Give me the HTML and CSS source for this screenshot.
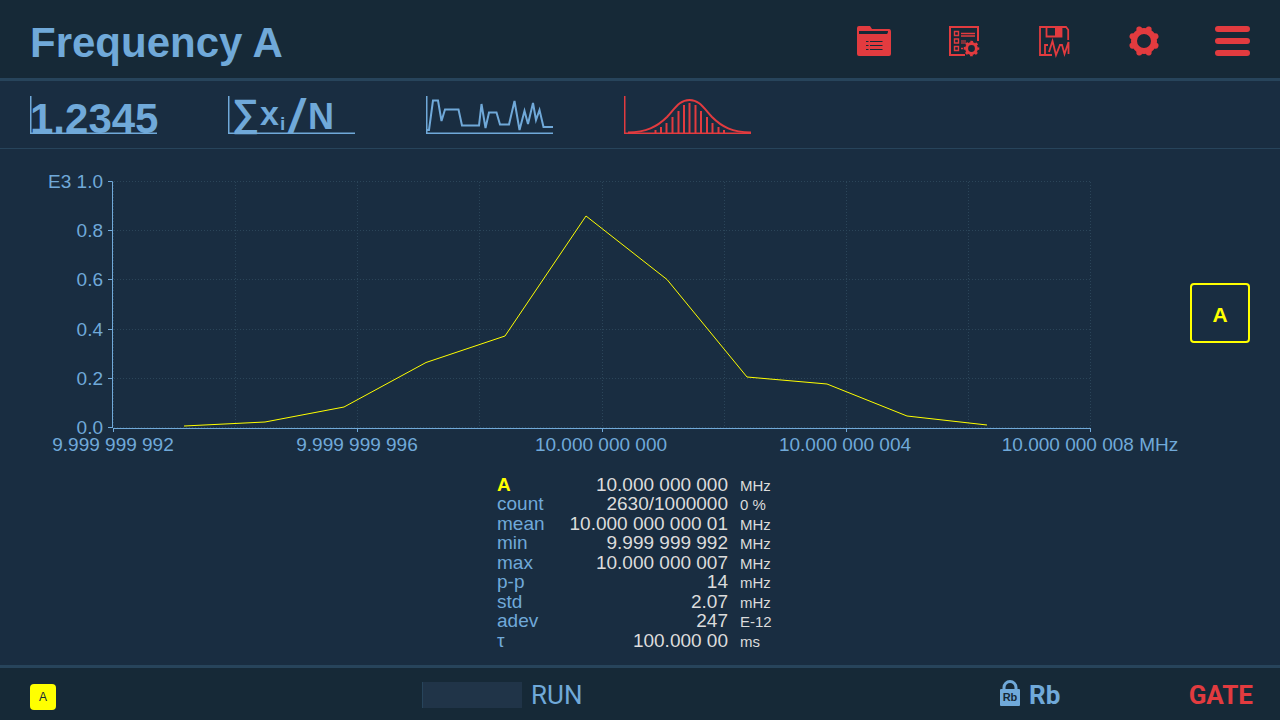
FILE: index.html
```html
<!DOCTYPE html>
<html lang="en">
<head>
  <meta charset="utf-8">
  <title>Frequency A</title>
  <link rel="stylesheet" href="styles.css">
</head>
<body>
  <header class="topbar">
    <h1 class="title">Frequency A</h1>
    <div class="tools">
      <button class="tool" aria-label="Files">
        <svg class="icon" viewBox="0 0 40 40">
          <path fill="currentColor" fill-rule="evenodd" d="M5 7h11l2 3h17q2 0 2 3v22q0 2-2 2H5q-2 0-2-2V9q0-2 2-2zM5 12v3h28q1 0 1-3z"/>
          <path class="cut" d="M12 22.500h2.500M16 22.500h12.500M12 26.500h2.500M16 26.500h12.500M12 30.500h2.500M16 30.500h12.500"/>
        </svg>
      </button>
      <button class="tool" aria-label="Measurement setup">
        <svg class="icon line" viewBox="0 0 40 40">
          <path stroke-width="2" d="M21 36H6V8h28v14"/>
          <path stroke-width="1.400" d="M10.500 12.500h4v4h-4zM10.500 20h4v4h-4zM10.500 27.500h4v4h-4zM17 14.500h14M17 17h14M17 29.500h2"/>
          <path stroke="none" fill="currentColor" opacity=".5" d="M17 21h5v4h-5z"/>
          <circle cx="27.500" cy="29.500" r="4.900" stroke-width="3"/>
          <circle cx="27.500" cy="29.500" r="6.700" stroke-width="2.200" stroke-dasharray="2.630 2.630" stroke-dashoffset="1.300"/>
        </svg>
      </button>
      <button class="tool" aria-label="Save data">
        <svg class="icon line" viewBox="0 0 40 40">
          <path stroke-width="1.800" d="M18 36H6V8h26l2.200 2.700V21M12.500 8v9.500h15V8"/>
          <path stroke="none" fill="currentColor" d="M21 7h7v11h-7z"/>
          <path stroke-width="1.800" d="M11 36V26h3M15 33l3.500-11 3.500 14 4-10h2l2.500 9 4-12v12"/>
        </svg>
      </button>
      <button class="tool" aria-label="Settings">
        <svg class="icon line" viewBox="0 0 40 40">
          <circle cx="20" cy="22" r="10" stroke-width="6"/>
          <path stroke-width="6" stroke-linecap="round" d="M24.600 10.500l-.4 1.400M31.500 17.400l-1.400.4M31.500 26.600l-1.400-.4M24.600 33.500l-.4-1.400M15.400 33.500l.4-1.400M8.500 26.600l1.400-.4M8.500 17.400l1.400.4M15.400 10.500l.4 1.400"/>
        </svg>
      </button>
      <button class="tool" aria-label="Menu">
        <svg class="icon line" viewBox="0 0 40 40">
          <path stroke-width="6" stroke-linecap="round" d="M4 10h29M4 22h29M4 34h29"/>
        </svg>
      </button>
    </div>
  </header>

  <nav class="views">
    <button class="view" aria-label="Numeric">
      <svg class="view-icon" viewBox="0 0 127 38">
        <path class="frame" d="M.750 0v37.250H127"/>
        <text x="0" y="37" font-size="42">1.2345</text>
      </svg>
    </button>
    <button class="view" aria-label="Statistics">
      <svg class="view-icon" viewBox="0 0 127 38">
        <path class="frame" d="M.750 0v37.250H127"/>
        <text x="4" y="30" font-size="38">∑</text>
        <text x="32" y="29" font-size="34">x</text>
        <text x="52" y="34" font-size="19">i</text>
        <text class="slash" x="61" y="37" font-size="48">/</text>
        <text x="80" y="33" font-size="36">N</text>
      </svg>
    </button>
    <button class="view" aria-label="Timeline">
      <svg class="view-icon" viewBox="0 0 127 38">
        <path class="frame" d="M.750 0v37.250H127"/>
        <path class="trace" d="M1 34h2L7 4.500h5L15.500 25 19 13.500h13.500L36 29.500h17L55.500 8l4 24L63 16.500h7.500L74 28.500h9L88.500 5l5 29 5-19 3.500 13L107 7l3 17 3.500-10 4 17H127"/>
      </svg>
    </button>
    <button class="view active" aria-label="Distribution">
      <svg class="view-icon" viewBox="0 0 127 38">
        <path class="frame" d="M.750 0v37.250H127"/>
        <path class="trace" d="M4 36.500C22 36 33 31 43 21 52 11 56 4 65.500 4S79 11 88 21C98 31 108 36 127 36.500"/>
        <path class="trace" d="M31.500 34v3M37 31v6M42.500 27v10M48.500 21v16M54.500 15v22M60 9v28M65.500 7v30M71.500 9v28M77 15v22M83 21v16M88.500 27v10M94.500 31v6M100 34v3"/>
      </svg>
    </button>
  </nav>

  <main class="content">
    <div class="graph-row">
      <svg class="graph" viewBox="0 151 1190 324">
        <g class="grid">
          <path d="M114 181.500h977M114 230.500h977M114 279.500h977M114 329.500h977M114 378.500h977M114 427.500h977"/>
          <path d="M113.500 182v246M235.500 182v246M357.500 182v246M479.500 182v246M602.500 182v246M724.500 182v246M846.500 182v246M968.500 182v246M1090.500 182v246"/>
        </g>
        <g class="axis">
          <path d="M108 181.500h4.500V428M108 230.500h4M108 279.500h4M108 329.500h4M108 378.500h4M108 427.500h4"/>
          <path d="M113 428.500h978M113.500 428v4M357.500 428v4M602.500 428v4M846.500 428v4M1090.500 428v4"/>
        </g>
        <g class="labels-y">
          <text x="103" y="188">E3 1.0</text>
          <text x="103" y="237">0.8</text>
          <text x="103" y="286">0.6</text>
          <text x="103" y="336">0.4</text>
          <text x="103" y="385">0.2</text>
          <text x="103" y="434">0.0</text>
        </g>
        <g class="labels-x">
          <text x="113" y="451">9.999 999 992</text>
          <text x="357" y="451">9.999 999 996</text>
          <text x="601" y="451">10.000 000 000</text>
          <text x="845" y="451">10.000 000 004</text>
          <text x="1090" y="451">10.000 000 008 MHz</text>
        </g>
        <polyline class="series" points="184,426 265,422 344,407 426,362.500 505,336 586,216 667,279.500 747,377 827,384 907,416 987,425"/>
      </svg>
      <button class="channel">A</button>
    </div>

    <table class="stats">
      <tr class="series-name"><th scope="row">A</th><td>10.000 000 000</td><td class="unit">MHz</td></tr>
      <tr><th scope="row">count</th><td>2630/1000000</td><td class="unit">0 %</td></tr>
      <tr><th scope="row">mean</th><td>10.000 000 000 01</td><td class="unit">MHz</td></tr>
      <tr><th scope="row">min</th><td>9.999 999 992</td><td class="unit">MHz</td></tr>
      <tr><th scope="row">max</th><td>10.000 000 007</td><td class="unit">MHz</td></tr>
      <tr><th scope="row">p-p</th><td>14</td><td class="unit">mHz</td></tr>
      <tr><th scope="row">std</th><td>2.07</td><td class="unit">mHz</td></tr>
      <tr><th scope="row">adev</th><td>247</td><td class="unit">E-12</td></tr>
      <tr><th scope="row">τ</th><td>100.000 00</td><td class="unit">ms</td></tr>
    </table>
  </main>

  <footer class="statusbar">
    <div class="input-badge">A</div>
    <div class="run">
      <div class="progress"></div>
      <span>RUN</span>
    </div>
    <div class="clock">
      <div class="reference">
        <svg class="lock" viewBox="0 0 20 26">
          <path d="M4 10V7.500a6 6 0 0 1 12 0V10" fill="none" stroke="currentColor" stroke-width="3"/>
          <rect y="9" width="20" height="17" rx="1" fill="currentColor"/>
          <text x="10" y="21" font-size="11">Rb</text>
        </svg>
        <span>Rb</span>
      </div>
      <span class="gate">GATE</span>
    </div>
  </footer>
</body>
</html>
```
FILE: styles.css
```css
* {
  box-sizing: border-box;
}

body {
  margin: 0;
  min-height: 100vh;
  display: flex;
  flex-direction: column;
  background: #192d41;
  color: #70a9d9;
  font-family: "Liberation Sans", Arial, sans-serif;
}

button {
  margin: 0;
  padding: 0;
  border: 0;
  background: none;
  color: inherit;
  font-family: inherit;
  cursor: pointer;
}

svg {
  display: block;
}

/* top bar */
.topbar {
  display: flex;
  align-items: center;
  justify-content: space-between;
  height: 81px;
  padding: 0 16px 0 30px;
  background: #162937;
  border-bottom: 3px solid #27445b;
}

.title {
  margin: 0;
  padding-top: 8px;
  font-size: 42px;
  line-height: 48px;
}

.tools {
  display: flex;
  gap: 30px;
  color: #e23b3f;
}

.tool {
  width: 60px;
  display: flex;
  justify-content: center;
}

.icon {
  width: 40px;
  height: 40px;
}

.line {
  fill: none;
  stroke: currentColor;
}

.cut {
  stroke: #162937;
  stroke-width: 1;
}

/* view selector */
.views {
  display: flex;
  gap: 71px;
  padding: 15px 30px 14px;
  border-bottom: 1px solid #27445b;
}

.view-icon {
  width: 127px;
  height: 38px;
  fill: currentColor;
  font-weight: bold;
  overflow: visible;
}

.view.active {
  color: #e23b3f;
}

.frame {
  fill: none;
  stroke: currentColor;
  stroke-width: 1.5;
}

.trace {
  fill: none;
  stroke: currentColor;
  stroke-width: 2;
}

.slash {
  font-style: italic;
}

/* graph */
.content {
  flex: 1;
}

.graph-row {
  display: flex;
  align-items: center;
  padding: 2px 30px 0 0;
}

.graph {
  flex: 1;
  min-width: 0;
  font-size: 19px;
  fill: #70a9d9;
}

.grid {
  stroke: #2b4559;
  stroke-dasharray: 1 2;
}

.axis {
  fill: none;
  stroke: #70a9d9;
}

.labels-y {
  text-anchor: end;
}

.labels-x {
  text-anchor: middle;
}

.series {
  fill: none;
  stroke: #ff0;
}

.channel {
  width: 60px;
  height: 60px;
  padding-top: 3px;
  border: 2px solid #ff0;
  border-radius: 4px;
  color: #ff0;
  font-size: 21px;
  font-weight: bold;
}

/* statistics */
.stats {
  width: 286px;
  height: 175px;
  margin: 0 auto;
  border-collapse: collapse;
  font-size: 19px;
  line-height: 19px;
}

.stats th,
.stats td {
  padding: 0;
  vertical-align: baseline;
}

.stats th {
  font-weight: normal;
  text-align: left;
}

.stats td {
  color: #dcdcdc;
  text-align: right;
}

.stats .unit {
  width: 55px;
  padding-left: 12px;
  font-size: 15px;
  line-height: 15px;
  text-align: left;
}

.stats .series-name th {
  color: #ff0;
  font-weight: bold;
}

/* status bar */
.statusbar {
  display: grid;
  grid-template-columns: 392fr 578fr 253fr;
  align-items: center;
  height: 55px;
  padding: 2px 27px 0 30px;
  background: #162937;
  border-top: 3px solid #27445b;
  font-family: Roboto, "Liberation Sans", sans-serif;
  font-size: 26px;
}

.input-badge {
  width: 26px;
  height: 26px;
  margin-top: 4px;
  border-radius: 4px;
  background: #ff0;
  color: #162937;
  font-family: "Liberation Sans", Arial, sans-serif;
  font-size: 12px;
  line-height: 26px;
  text-align: center;
}

.run,
.reference {
  display: flex;
  align-items: center;
  gap: 9px;
}

.progress {
  width: 100px;
  height: 26px;
  border-left: 1px solid #27445b;
  background: #203448;
}

.clock {
  display: flex;
  align-items: center;
  justify-content: space-between;
  font-weight: bold;
}

.lock {
  width: 20px;
  height: 26px;
  margin-bottom: 4px;
}

.lock text {
  fill: #162937;
  font-family: "Liberation Sans", Arial, sans-serif;
  text-anchor: middle;
}

.gate {
  color: #e23b3f;
}
```
